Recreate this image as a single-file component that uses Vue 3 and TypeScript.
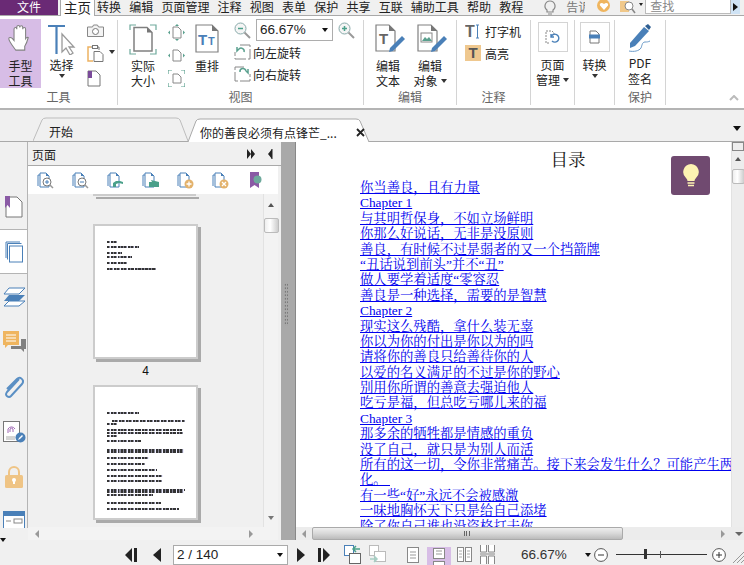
<script setup lang="ts">
const menus = ['转换', '编辑', '页面管理', '注释', '视图', '表单', '保护', '共享', '互联', '辅助工具', '帮助', '教程']
const links = [
  '你当善良，且有力量', 'Chapter 1', '与其明哲保身，不如立场鲜明', '你那么好说话，无非是没原则',
  '善良，有时候不过是弱者的又一个挡箭牌', '“丑话说到前头”并不“丑”', '做人要学着适度“零容忍',
  '善良是一种选择，需要的是智慧', 'Chapter 2', '现实这么残酷，拿什么装无辜', '你以为你的付出是你以为的吗',
  '请将你的善良只给善待你的人', '以爱的名义满足的不过是你的野心', '别用你所谓的善意去强迫他人',
  '吃亏是福，但总吃亏哪儿来的福', 'Chapter 3', '那多余的牺牲都是情感的重负', '没了自己，就只是为别人而活',
  '所有的这一切，令你非常痛苦。接下来会发生什么？可能产生两', '化。 ', '有一些“好”永远不会被感激',
  '一味地胸怀天下只是给自己添堵', '除了你自己谁也没资格打击你'
]
const panelTools = ['zoomin', 'zoomout', 'extract', 'replace', 'add', 'del', 'mark']
const thumbA = [[0, 10, 0], [0, 32, 4], [0, 15, 5], [0, 25, 3], [0, 20, 5], [0, 49, 5]]
const thumbB = [[0, 32, 0], [5, 73, 6], [0, 10, 1], [0, 75, 4], [0, 76, 1], [0, 10, 1], [0, 34, 3], [0, 77, 7], [0, 77, 0], [0, 42, 4], [0, 38, 4], [0, 50, 4], [0, 56, 4], [0, 55, 3], [0, 78, 7], [0, 77, 0], [0, 46, 1], [0, 54, 6], [0, 72, 4]]
</script>

<template>
  <div class="app">
    <header class="menubar">
      <div class="file">文件</div>
      <div class="home">主页</div>
      <nav class="menus"><span v-for="m in menus" :key="m">{{ m }}</span></nav>
      <div class="tell">
        <svg width="14" height="15" viewBox="0 0 14 15"><path d="M7 1a5 5 0 0 0-3 9v2h6v-2a5 5 0 0 0-3-9zM5 14h4" fill="none" stroke="#888" stroke-width="1.2"/></svg>
        <span class="tell-text">告诉</span>
      </div>
      <span class="heart"><svg width="12" height="12" viewBox="0 0 12 12"><path d="M6 10 2 5.500C1 3 4 2 6 4c2-2 5-1 4 1.500z" fill="#fff"/></svg></span>
      <svg class="find" width="24" height="14" viewBox="0 0 24 14"><rect x="1" y="1" width="9" height="11" fill="#f0c88a"/><circle cx="10" cy="6" r="4" fill="#fff" stroke="#888"/><path d="m13 9 3 4" stroke="#888" stroke-width="1.500"/><path d="m20 3 4 0-2 3z" fill="#222"/></svg>
      <div class="search">查找</div>
      <div class="searchbtn"><i></i></div>
    </header>

    <section class="ribbon">
      <div class="group g-tools">
        <div class="items">
          <button class="big hand">
            <svg width="30" height="31" viewBox="0 0 30 31"><path d="M9 30C6 26 1 20 1 17c0-2 2-2 4-.5l2 2.500V6c0-2.500 3.200-2.500 3.200 0V3.500c0-2.500 3.400-2.500 3.400 0V4c0-2.500 3.400-2.500 3.400 0v2c0-2.500 3.300-2.500 3.300 0v11c1-1.500 2-2 3-1.500-1 4-2 7-4 10v4.500z" fill="#fff" stroke="#808080" stroke-width="1.200"/></svg>
            <span>手型<br>工具</span>
          </button>
          <button class="big select">
            <svg width="30" height="31" viewBox="0 0 30 31"><path d="M1 2h17M9.500 2v28" stroke="#4a80b8" stroke-width="2.200" fill="none"/><path d="M15 10v18l4-4 4 7 3-2-4-6h5z" fill="#fff" stroke="#9a9a9a" stroke-width="1.300"/></svg>
            <span>选择</span><i class="caret"></i>
          </button>
          <div class="stack tools-stack">
            <svg width="17" height="13" viewBox="0 0 17 13"><path d="M.500 3h5l1-2h4l1 2h5v9.500H.500z" fill="#f4f4f4" stroke="#888"/><circle cx="8.500" cy="7.500" r="3" fill="#fff" stroke="#777"/></svg>
            <div class="with-caret">
              <svg width="20" height="17" viewBox="0 0 20 17"><path d="M4 2H1v14h5" fill="none" stroke="#edb262" stroke-width="1.500"/><path d="M4 2h8v3" fill="none" stroke="#777"/><rect x="5.500" y=".500" width="5" height="3" fill="#fff" stroke="#777"/><path d="M7 6.500h6l3 3v7H7z" fill="#fff" stroke="#777"/></svg><i class="caret"></i>
            </div>
            <svg width="14" height="17" viewBox="0 0 14 17"><path d="M1 1h8l4 4v11H1z" fill="#fff" stroke="#777"/><rect x="1" y="1" width="4" height="7" fill="#7a4a9a"/></svg>
          </div>
        </div>
        <div class="glabel">工具</div>
      </div>

      <div class="group g-view">
        <div class="items">
          <button class="big actual">
            <svg width="28" height="31" viewBox="0 0 28 31"><path d="M1 6V1h6M21 1h6v5M1 25v5h6M21 30h6v-5" fill="none" stroke="#6ea99c" stroke-width="1.200"/><path d="M5 3.500h13l5 5V27H5z" fill="#fff" stroke="#808080" stroke-width="1.500"/><path d="M18 3.500 23 8.500H18z" fill="#777"/></svg>
            <span>实际<br>大小</span>
          </button>
          <div class="stack fit-stack">
            <svg width="17" height="17" viewBox="0 0 17 17"><path d="M5 3h5l3 3v8H5z" fill="#fff" stroke="#888"/><path d="m9 0-2 2h4zM9 17l-2-2h4zM0 8.500l2-2v4zM17 8.500l-2-2v4z" fill="#5aa08e"/></svg>
            <svg width="17" height="13" viewBox="0 0 17 13"><path d="M5 1h5l3 3v8H5z" fill="#fff" stroke="#888"/><path d="M0 6.500l2-2v4zM17 6.500l-2-2v4z" fill="#5aa08e"/></svg>
            <svg width="17" height="17" viewBox="0 0 17 17"><path d="M5 4h5l3 3v6H5z" fill="#fff" stroke="#888"/><path d="M0 4V0h4M13 0h4v4M0 13v4h4M17 13v4h-4" fill="none" stroke="#5aa08e" stroke-width="1.200"/></svg>
          </div>
          <button class="big reflow">
            <svg width="24" height="29" viewBox="0 0 24 29"><path d="M1 1h16l6 6v21H1z" fill="#fff" stroke="#808080" stroke-width="1.200"/><path d="M17 1l6 6h-6z" fill="#777"/><text x="3" y="21" font-size="15" font-weight="700" fill="#4a80b8" font-family="Liberation Sans">T</text><text x="13" y="21" font-size="11" font-weight="700" fill="#4a80b8" font-family="Liberation Sans">T</text></svg>
            <span>重排</span>
          </button>
          <div class="zoomcol">
            <div class="zoomrow">
              <svg width="17" height="17" viewBox="0 0 17 17"><circle cx="6.500" cy="6.500" r="5.500" fill="#f5f5f5" stroke="#8aa"/><path d="m10.500 10.500 5.500 5.500" stroke="#999" stroke-width="2"/><path d="M4 6.500h5" stroke="#4aa08a" stroke-width="1.500"/></svg>
              <div class="combo"><span>66.67%</span><i class="caret dark"></i></div>
              <svg width="17" height="17" viewBox="0 0 17 17"><circle cx="6.500" cy="6.500" r="5.500" fill="#f5f5f5" stroke="#8aa"/><path d="m10.500 10.500 5.500 5.500" stroke="#999" stroke-width="2"/><path d="M4 6.500h5M6.500 4v5" stroke="#4aa08a" stroke-width="1.500"/></svg>
            </div>
            <div class="rot">
              <svg width="17" height="16" viewBox="0 0 17 16"><path d="M6 1h10v14H1V8" fill="none" stroke="#888" stroke-dasharray="12 2"/><path d="M10 8a3 3 0 0 0-5-3L3 7V3" fill="none" stroke="#5aa08e" stroke-width="1.500"/></svg>
              <span>向左旋转</span>
            </div>
            <div class="rot">
              <svg width="17" height="16" viewBox="0 0 17 16"><path d="M10 1H1v14h15V8" fill="none" stroke="#888" stroke-dasharray="12 2"/><path d="M6 6a3 3 0 0 1 6-1l2 2V3" fill="none" stroke="#5aa08e" stroke-width="1.500"/></svg>
              <span>向右旋转</span>
            </div>
          </div>
        </div>
        <div class="glabel">视图</div>
      </div>

      <div class="group g-edit">
        <div class="items">
          <button class="big w42">
            <svg width="30" height="29" viewBox="0 0 30 29"><path d="M1 1h13l6 6v20H1z" fill="#fff" stroke="#808080" stroke-width="1.200"/><path d="M14 1l6 6h-6z" fill="#777"/><text x="4" y="20" font-size="15" font-weight="700" fill="#666" font-family="Liberation Sans">T</text><path d="m14 28 1-4 12-12 3 3-12 12z" fill="#4a80b8"/></svg>
            <span>编辑<br>文本</span>
          </button>
          <button class="big w42">
            <svg width="30" height="29" viewBox="0 0 30 29"><path d="M1 1h13l6 6v20H1z" fill="#fff" stroke="#808080" stroke-width="1.200"/><path d="M14 1l6 6h-6z" fill="#777"/><rect x="4" y="9" width="11" height="9" fill="#fff" stroke="#888"/><path d="m5 17 3-4 2 2 2-2 3 4z" fill="#5aa08e"/><path d="m14 28 1-4 12-12 3 3-12 12z" fill="#4a80b8"/></svg>
            <span>编辑<br>对象<i class="caret inline"></i></span>
          </button>
        </div>
        <div class="glabel">编辑</div>
      </div>

      <div class="group g-note">
        <div class="items note-items">
          <div class="rot note">
            <svg width="16" height="15" viewBox="0 0 16 15"><text x="0" y="13" font-size="16" font-weight="700" fill="#666" font-family="Liberation Sans">T</text><path d="M11 1h3M12.500 1v13M11 14h3" stroke="#4a80b8" fill="none"/></svg>
            <span>打字机</span>
          </div>
          <div class="rot note">
            <span class="hl">T</span>
            <span>高亮</span>
          </div>
        </div>
        <div class="glabel">注释</div>
      </div>

      <div class="group g-page">
        <div class="items">
          <button class="big framed">
            <b class="frame"><svg width="15" height="15" viewBox="0 0 15 15"><path d="M4 13H1V1h6l2 2v2" fill="none" stroke="#888" stroke-dasharray="2 1"/><path d="M6 7a4 4 0 1 1 1 4M6 4v3h3" fill="none" stroke="#4a80b8" stroke-width="1.400"/></svg></b>
            <span>页面<br>管理<i class="caret inline"></i></span>
          </button>
        </div>
      </div>

      <div class="group g-conv">
        <div class="items">
          <button class="big framed">
            <b class="frame"><svg width="11" height="14" viewBox="0 0 11 14"><path d="M1 1h6l3 3v9H1z" fill="#fff" stroke="#777"/><rect x="0" y="4.500" width="11" height="4" fill="#4a80b8"/></svg></b>
            <span>转换</span><i class="caret"></i>
          </button>
        </div>
      </div>

      <div class="group g-sign">
        <div class="items">
          <button class="big">
            <svg class="pen" width="26" height="28" viewBox="0 0 26 28"><path d="M2 19 16 3l5 4L7 22l-5 2z" fill="#4a80b8"/><path d="M17 2l3-2 3 3-2 3z" fill="#2f5f92"/><path d="M1 27c5 1 10 0 12-3 1-2 1-6 4-6 2 0 3 0 5-1" fill="none" stroke="#6a9ac8"/></svg>
            <span class="pdf">PDF<br>签名</span>
          </button>
        </div>
        <div class="glabel">保护</div>
      </div>
      <svg class="collapse" width="10" height="6" viewBox="0 0 10 6"><path d="m1 5 4-4 4 4" fill="none" stroke="#bbb" stroke-width="2"/></svg>
    </section>

    <section class="tabbar">
      <div class="tab first">
        <svg class="tabshape" width="155" height="24" viewBox="0 0 155 24"><path d="M0 24 9 3q1-2 4-2h130q3 0 4 2l8 21" fill="none" stroke="#bdbdbd"/></svg>
        <span>开始</span>
      </div>
      <div class="tab current">
        <svg class="tabshape" width="185" height="24" viewBox="0 0 185 24"><path d="M0 24 8 3q1-2 4-2h156q3 0 4 2l9 21" fill="#fff" stroke="#a9a9a9"/></svg>
        <span>你的善良必须有点锋芒_...</span>
        <svg class="closex" width="9" height="9" viewBox="0 0 9 9"><path d="m1 1 7 7M8 1 1 8" stroke="#222" stroke-width="1.800"/></svg>
      </div>
      <i class="tabmenu"></i>
    </section>

    <main class="main">
      <aside class="rail">
        <div class="railitems">
          <div class="railbtn">
            <svg width="18" height="22" viewBox="0 0 18 22"><path d="M1 1h11l5 5v15H1z" fill="#fff" stroke="#777"/><path d="M0 0h5v12L2.500 9 0 12z" fill="#8a5aa5"/></svg>
          </div>
          <div class="railbtn active">
            <svg width="19" height="22" viewBox="0 0 19 22"><path d="M1 17V1h14M2.500 18.500V2.500h14" fill="none" stroke="#4a80b8"/><rect x="4.500" y="5" width="13" height="16" fill="#fff" stroke="#4a80b8"/></svg>
          </div>
          <div class="railbtn">
            <svg width="23" height="20" viewBox="0 0 23 20"><path d="M6 1h16l-6 6H1zM1 19l5-5h16l-6 5z" fill="#fff" stroke="#4a80b8"/><path d="M6 8h16l-6 6H1z" fill="#4a80b8"/></svg>
          </div>
          <div class="railbtn">
            <svg width="23" height="21" viewBox="0 0 23 21"><path d="M0 0h16v14H5l-3 3v-3H0z" fill="#efb55f"/><path d="M3 4h10M3 7h10M3 10h10" stroke="#fff"/><path d="M18 8h5v10h-2v3l-3-3H8v-3h10z" fill="#808080"/></svg>
          </div>
          <div class="railbtn">
            <svg width="20" height="22" viewBox="0 0 20 22"><path d="m15 3-12 13c-3 4 2 6 4 4L18 8c3-4-2-8-5-5L3 13" fill="none" stroke="#5a8fc4" stroke-width="2"/></svg>
          </div>
          <div class="railbtn">
            <svg width="23" height="22" viewBox="0 0 23 22"><rect x=".500" y=".500" width="16" height="20" fill="#fff" stroke="#777"/><path d="M5 12V8a4 4 0 0 1 7 0M7 11V8a2 2 0 0 1 3 0v3" fill="none" stroke="#a06ab5"/><path d="M3 16h9M3 18h9" stroke="#aaa"/><circle cx="17.500" cy="16.500" r="5" fill="#4a80b8"/><path d="m15 19 1-2 3-3 1 1-3 3z" fill="#fff"/></svg>
          </div>
          <div class="railbtn">
            <svg width="18" height="22" viewBox="0 0 18 22"><path d="M4 10V6a5 5 0 0 1 10 0v4" fill="none" stroke="#efc485" stroke-width="2"/><rect y="9" width="18" height="13" rx="1.500" fill="#efc485"/><circle cx="9" cy="14" r="2" fill="#fff"/><rect x="8" y="14" width="2" height="4" fill="#fff"/></svg>
          </div>
          <div class="railbtn">
            <svg width="22" height="22" viewBox="0 0 22 22"><rect x=".500" y=".500" width="21" height="21" fill="#fff" stroke="#4a80b8"/><rect width="22" height="5" fill="#4a80b8"/><path d="M3 10h5" stroke="#888"/><rect x="11" y="8" width="8" height="4" fill="none" stroke="#888"/></svg>
          </div>
        </div>
        <i class="railmore"></i>
      </aside>

      <section class="panel">
        <div class="panelhead">
          <span>页面</span>
          <svg width="26" height="10" viewBox="0 0 26 10"><path d="M0 0l4 5-4 5zM4 0l4 5-4 5zM25 0v10l-4-5z" fill="#222"/><path d="M25 0v10" stroke="#222"/></svg>
        </div>
        <div class="paneltools">
          <svg v-for="t in panelTools" :key="t" width="17" height="17" viewBox="0 0 17 17">
            <template v-if="t !== 'mark'">
              <path d="M1 14V3h2M3 15V1h6l3 3v11z" fill="#fff" stroke="#4a80b8"/>
              <path d="M9 1l3 3H9z" fill="#4a80b8"/>
            </template>
            <template v-if="t === 'zoomin' || t === 'zoomout'">
              <circle cx="10" cy="10" r="4" fill="#fff" stroke="#777"/><path d="m13 13 3 3" stroke="#999" stroke-width="1.500"/><path d="M8 10h4" stroke="#4a80b8"/>
              <path v-if="t === 'zoomin'" d="M10 8v4" stroke="#4a80b8"/>
            </template>
            <path v-if="t === 'extract'" d="M6 15v-4l3-2h4l3 1v2l-4-1-3 1v3z" fill="#4aa08a"/>
            <path v-if="t === 'replace'" d="M7 10h3l-1-2 4 1 4 1v5H7z" fill="#4aa08a"/>
            <template v-if="t === 'add' || t === 'del'">
              <circle cx="12" cy="12" r="4.500" fill="#e3b26c"/>
              <path v-if="t === 'add'" d="M9.500 12h5M12 9.500v5" stroke="#fff" stroke-width="1.300"/>
              <path v-else d="m10 10 4 4M14 10l-4 4" stroke="#fff" stroke-width="1.300"/>
            </template>
            <template v-if="t === 'mark'">
              <path d="M3 0h9v16l-4.500-3L3 16z" fill="#8a5aa5"/><circle cx="10.500" cy="7.500" r="4" fill="#6ea99c"/>
            </template>
          </svg>
        </div>
        <div class="thumbwrap">
          <div class="thumbs">
            <div class="prevpage"></div>
            <div class="sheet sheet-a">
              <i v-for="(l, i) in thumbA" :key="i" :style="{ marginLeft: l[0] + 'px', width: l[1] + 'px', marginTop: l[2] + 'px' }"></i>
            </div>
            <div class="pageno">4</div>
            <div class="sheet sheet-b">
              <i v-for="(l, i) in thumbB" :key="i" :style="{ marginLeft: l[0] + 'px', width: l[1] + 'px', marginTop: l[2] + 'px' }"></i>
            </div>
          </div>
          <div class="vscroll small">
            <i class="up"></i>
            <b class="thumb"></b>
            <i class="down"></i>
          </div>
        </div>
        <div class="hscroll panelh"><i class="lt"></i><i class="rt"></i></div>
      </section>

      <div class="splitter"><i></i></div>

      <section class="docwrap">
        <div class="docmain">
          <article class="doc">
            <div class="page">
              <h1>目录</h1>
              <a v-for="(l, i) in links" :key="i" href="#" :class="{ first: i === 0 }">{{ l }}</a>
            </div>
            <div class="tip">
              <svg width="18" height="25" viewBox="0 0 18 25"><path d="M9 1a8 8 0 0 0-5 14c1 1 1.500 2 1.500 3h7c0-1 .5-2 1.500-3A8 8 0 0 0 9 1z" fill="#fdf3b2"/><path d="M5.500 20h7M6 22.500h6" stroke="#fdf3b2" stroke-width="1.500"/></svg>
            </div>
          </article>
          <div class="vscroll big">
            <em class="splitbox"></em>
            <i class="up"></i>
            <b class="thumb"></b>
          </div>
        </div>
        <div class="hscroll dochs">
          <i class="lt"></i><b class="hthumb"><u></u></b><i class="rt"></i><i class="dn"></i>
        </div>
      </section>
    </main>

    <footer class="status">
      <svg class="n1" width="16" height="14" viewBox="0 0 16 14"><path d="M7 0v14L0 7zM9 0h3v14H9z" fill="#222"/></svg>
      <svg class="n2" width="8" height="14" viewBox="0 0 8 14"><path d="M8 0v14L0 7z" fill="#222"/></svg>
      <div class="pageinput"><span>2 / 140</span><i class="caret dark"></i></div>
      <svg class="n3" width="8" height="14" viewBox="0 0 8 14"><path d="M0 0v14l8-7z" fill="#222"/></svg>
      <svg class="n4" width="12" height="14" viewBox="0 0 12 14"><path d="M0 0h3v14H0zM5 0v14l7-7z" fill="#222"/></svg>
      <svg class="n5" width="17" height="19" viewBox="0 0 17 19"><rect x=".500" y=".500" width="9" height="10" fill="#fff" stroke="#4a80b8"/><rect x="5.500" y="8.500" width="11" height="10" fill="#fff" stroke="#666"/><path d="M16 4H9M12 1 9 4l3 3" fill="none" stroke="#4aa08a" stroke-width="1.500"/></svg>
      <svg class="n6" width="17" height="19" viewBox="0 0 17 19"><rect x=".500" y=".500" width="9" height="10" fill="#fff" stroke="#bbb"/><rect x="5.500" y="6.500" width="11" height="10" fill="#fff" stroke="#bbb"/><path d="M1 14h7M5 11l3 3-3 3" fill="none" stroke="#a6cfc4" stroke-width="1.500"/></svg>
      <svg class="n7" width="12" height="16" viewBox="0 0 12 16"><rect x=".500" y=".500" width="11" height="15" fill="#fff" stroke="#888"/><path d="M3 5h6M3 8h6M3 11h6" stroke="#999"/></svg>
      <div class="n8"><svg width="12" height="17" viewBox="0 0 12 17"><rect x=".500" y=".500" width="11" height="10" fill="#fff" stroke="#888"/><path d="M3 3h6M3 6h6" stroke="#999"/><rect x=".500" y="13.500" width="11" height="6" fill="#fff" stroke="#888"/></svg></div>
      <svg class="n9" width="15" height="15" viewBox="0 0 15 15"><rect x=".500" y=".500" width="6" height="14" fill="#fff" stroke="#888"/><rect x="8.500" y=".500" width="6" height="14" fill="#fff" stroke="#888"/><path d="M2 4h3M2 7h3M2 10h3M10 4h3M10 7h3M10 10h3" stroke="#aaa"/></svg>
      <svg class="n10" width="15" height="19" viewBox="0 0 15 19"><path d="M.5 0v7h6V0M8.500 0v7h6V0M.5 19v-8h6v8M8.500 19v-8h6v8M0 9h15" fill="#fff" stroke="#888"/></svg>
      <span class="pct">66.67%</span>
      <i class="caret dark pctcaret"></i>
      <svg class="n11" width="14" height="14" viewBox="0 0 14 14"><circle cx="7" cy="7" r="6.400" fill="#fff" stroke="#555"/><path d="M4 7h6" stroke="#333"/></svg>
      <div class="slider"><b></b><u></u></div>
      <svg class="n12" width="14" height="14" viewBox="0 0 14 14"><circle cx="7" cy="7" r="6.400" fill="#fff" stroke="#555"/><path d="M4 7h6M7 4v6" stroke="#333"/></svg>
      <svg class="grip" width="11" height="11" viewBox="0 0 11 11"><path d="M0 11 11 0M4 11l7-7M8 11l3-3" stroke="#999"/></svg>
    </footer>
  </div>
</template>

<style>
html, body { margin: 0; background: #f0f0f0; }
</style>

<style scoped>
.app { width: 744px; height: 565px; overflow: hidden; display: flex; flex-direction: column; background: #f0f0f0; color: #222; font: 12px/15px "Noto Sans CJK SC", "Noto Sans", sans-serif; }
button { all: unset; box-sizing: border-box; }
i, b, u, em { display: block; font-style: normal; text-decoration: none; }
.caret { width: 0; height: 0; border: 3.500px solid transparent; border-top: 4px solid #333; border-bottom: 0; }
.caret.dark { border-top-color: #111; }
.caret.inline { display: inline-block; margin-left: 3px; vertical-align: 3px; }

.menubar { height: 15px; flex: none; display: flex; border-bottom: 1px solid #a9a9a9; position: relative; line-height: 14px; white-space: nowrap; }
.file { width: 58px; height: 15px; background: #6a2a75; color: #fff; text-align: center; }
.home { width: 33px; height: 16px; margin: 0 2px; background: #fff; border: 1px solid #a9a9a9; border-width: 0 1px; text-align: center; font-size: 13.500px; position: relative; z-index: 1; }
.menus { display: flex; gap: 8.200px; }
.tell { margin-left: 20px; display: flex; gap: 9px; width: 43px; overflow: hidden; color: #777; flex: none; }
.tell-text { width: 19px; overflow: hidden; flex: none; }
.heart { width: 13px; height: 13px; border-radius: 50%; background: #efb55f; display: flex; align-items: center; justify-content: center; margin-left: 11px; margin-top: -1px; flex: none; }
.find { margin-left: 9px; flex: none; }
.search { width: 86px; height: 14px; margin-left: 2px; background: #fff; border: 1px solid #bbb; border-top: 0; box-sizing: border-box; color: #888; padding-left: 4px; line-height: 12px; flex: none; }
.searchbtn { width: 9px; height: 14px; background: #cfe3f5; flex: none; }
.searchbtn i { width: 0; height: 0; margin: 3px 0 0 2px; border: 4px solid transparent; border-left: 5px solid #111; border-right: 0; }

.ribbon { height: 92px; flex: none; background: #fff; border-bottom: 2px solid #b4b4b4; display: flex; position: relative; }
.group { display: flex; flex-direction: column; flex: none; position: relative; box-sizing: border-box; border-right: 1px solid #d4d4d4; margin: 4px 0 3px; height: 85px; }
.items { display: flex; flex: 1; min-height: 0; margin-top: -1px; }
.glabel { position: absolute; bottom: 1px; left: 0; right: 0; text-align: center; color: #666; line-height: 15px; }
.g-tools { width: 118px; }
.g-view { width: 246px; }
.g-edit { width: 93px; }
.g-note { width: 74px; }
.g-page { width: 44px; }
.g-conv { width: 40px; }
.g-sign { width: 51px; }
.big { display: flex; flex-direction: column; align-items: center; text-align: center; line-height: 15px; flex: none; padding-top: 5px; }
.big > span { margin-top: 7px; white-space: nowrap; }
.hand { width: 41px; height: 69px; background: #d7bde6; }
.select { width: 41px; }
.select > span { margin-top: 2px; }
.select .caret { margin-top: 2px; }
.stack { display: flex; flex-direction: column; align-items: flex-start; }
.tools-stack { margin-left: 5px; padding-top: 5px; gap: 8px; }
.with-caret { display: flex; align-items: center; gap: 2px; }
.with-caret .caret { margin-top: -4px; }
.actual { width: 46px; margin-left: 2px; }
.actual > span { margin-top: 3px; }
.fit-stack { width: 22px; padding: 5px 0 0 2px; gap: 8px; box-sizing: border-box; flex: none; }
.reflow { width: 38px; }
.reflow > span { margin-top: 5px; }
.zoomcol { margin-left: 8px; width: 122px; display: flex; flex-direction: column; padding-top: 0; flex: none; }
.zoomrow { display: flex; align-items: center; gap: 5px; height: 22px; }
.zoomrow svg { flex: none; }
.combo { width: 77px; height: 22px; box-sizing: border-box; border: 1px solid #adadad; display: flex; align-items: center; justify-content: space-between; padding: 0 4px 0 3px; font: 13.500px/20px "Liberation Sans", sans-serif; }
.rot { display: flex; align-items: center; gap: 2px; height: 22px; }
.rot svg { flex: none; }
.w42 { width: 42px; }
.w42 svg { margin-left: 4px; }
.w42 > span { margin-top: 5px; }
.g-edit .items { padding-left: 3px; }
.note-items { flex-direction: column; padding: 0 0 0 8px; }
.note { gap: 4px; height: 22px; flex: none; }
.note-items .note:first-child { margin-top: 1px; }
.hl { width: 16px; height: 16px; background: #efc88f; color: #555; font: 700 15px/16px "Liberation Sans", sans-serif; text-align: center; }
.framed { width: 100%; padding-top: 3px; }
.frame { width: 30px; height: 30px; border: 1px solid #d4d4d4; box-sizing: border-box; display: flex; align-items: center; justify-content: center; }
.framed > span { margin-top: 5px; }
.framed .caret { margin-top: 2px; }
.g-sign .big { width: 100%; }
.pen { margin-left: 2px; }
.big > .pdf { margin-top: 3px; line-height: 16px; }
.collapse { position: absolute; left: 729px; top: 79px; }

.tabbar { height: 32px; flex: none; border-bottom: 1px solid #a9a9a9; box-sizing: border-box; display: flex; align-items: flex-end; position: relative; padding-left: 33px; background: #f0f0f0; }
.tab { height: 24px; position: relative; flex: none; }
.tab span { position: relative; display: block; white-space: nowrap; line-height: 29px; }
.tabshape { position: absolute; left: 0; top: 0; }
.first { width: 155px; }
.first span { padding-left: 16px; }
.current { width: 185px; margin-bottom: -1px; }
.current span { padding-left: 12px; }
.closex { position: absolute; left: 168px; top: 10px; }
.tabmenu { position: absolute; left: 733px; top: 16px; width: 0; height: 0; border: 4.500px solid transparent; border-top: 5px solid #111; border-bottom: 0; }

.main { flex: 1; display: flex; min-height: 0; }
.rail { width: 28px; flex: none; box-sizing: border-box; position: relative; }
.railitems { height: 386px; padding-top: 42px; box-sizing: border-box; overflow: hidden; border-right: 1px solid #b4b4b4; }
.railbtn { height: 45px; box-sizing: border-box; display: flex; align-items: center; justify-content: center; margin-right: -1px; }
.railbtn.active { background: #fff; border: 1px solid #b4b4b4; border-width: 1px 0; position: relative; }
.railmore { position: absolute; left: 0; top: 396px; width: 0; height: 0; border: 3.500px solid transparent; border-top: 4px solid #111; border-bottom: 0; }
.panel { width: 253px; flex: none; display: flex; flex-direction: column; }
.panelhead { height: 24px; padding: 1px 8px 0 4px; border-bottom: 1px solid #a9a9a9; box-sizing: border-box; display: flex; justify-content: space-between; align-items: center; flex: none; }
.paneltools { height: 28px; margin-right: 3px; background: #fff; display: flex; align-items: center; padding-left: 9px; gap: 18px; flex: none; }
.thumbwrap { flex: 1; min-height: 0; display: flex; overflow: hidden; }
.thumbs { width: 235px; flex: none; overflow: hidden; padding-left: 65px; box-sizing: border-box; }
.prevpage { width: 103px; height: 0; border-bottom: 2px solid #ccc; box-shadow: 3px 3px 0 #aaa; }
.sheet { width: 105px; height: 135px; box-sizing: border-box; background: #fff; border: 2px solid #ccc; box-shadow: 3px 3px 0 #aaa; padding-left: 12px; }
.sheet i { height: 2px; background: repeating-linear-gradient(90deg, #333 0 2px, #889 2px 3px, #eef 3px 3.500px); }
.sheet-a { margin-top: 28px; padding-top: 15px; }
.sheet-a i { margin-bottom: -1px; }
.sheet-b { padding-top: 25px; }
.pageno { height: 26px; text-align: center; width: 105px; font: 12px/24px "Liberation Sans", sans-serif; color: #111; }
.vscroll { flex: none; width: 15px; box-sizing: border-box; background: #f3f3f3; border-left: 1px solid #e2e2e2; position: relative; margin-right: 3px; }
.vscroll .up { width: 0; height: 0; border: 3.500px solid transparent; border-bottom: 4px solid #555; border-top: 0; margin: 9px auto 0; }
.vscroll .thumb { width: 15px; height: 15px; box-sizing: border-box; border: 1px solid #bbb; border-radius: 2px; background: linear-gradient(90deg, #eee, #fff 40%, #ccc); margin: 11px 0 0 0; }
.vscroll .down { position: absolute; left: 4px; bottom: 7px; width: 0; height: 0; border: 3.500px solid transparent; border-top: 4px solid #777; border-bottom: 0; }
.hscroll { height: 13px; flex: none; position: relative; background: #f3f3f3; display: flex; align-items: center; }
.panelh { margin-right: 3px; }
.lt { width: 0; height: 0; border: 4px solid transparent; border-right: 4px solid #999; border-left: 0; margin-left: 7px; }
.rt { width: 0; height: 0; border: 4px solid transparent; border-left: 4px solid #999; border-right: 0; position: absolute; right: 25px; }
.splitter { width: 15px; flex: none; background: #a9a9a9; border-right: 1px solid #888; box-sizing: border-box; position: relative; }
.splitter i { width: 4px; height: 43px; margin: 141px 0 0 3px; background: radial-gradient(circle, #666 0.7px, transparent 0.8px) 0 0 / 2.500px 3.500px; }
.docwrap { flex: 1; min-width: 0; display: flex; flex-direction: column; }
.docmain { flex: 1; min-height: 0; display: flex; }
.doc { width: 435px; flex: none; background: #fff; overflow: hidden; position: relative; }
.page { width: 480px; padding-left: 64px; box-sizing: border-box; font: 13.330px/15.400px "Liberation Serif", "Noto Serif CJK SC", "Noto Sans CJK SC", serif; }
h1 { margin: 7px 0 0; font-weight: 400; font-size: 17.500px; line-height: 22px; text-align: center; color: #111; }
.page a { display: block; color: #00e; text-decoration: underline; white-space: pre; height: 15.400px; }
.page a.first { margin-top: 9px; margin-bottom: 0; }
.tip { position: absolute; left: 375px; top: 14px; width: 39px; height: 39px; border-radius: 3px; background: #704a70; display: flex; align-items: center; justify-content: center; }
.vscroll.big { width: 13px; margin: 0; background: #ededed; padding: 0; display: block; }
.splitbox { height: 9px; border: 1px solid #888; box-sizing: border-box; background: #eee; }
.vscroll.big .up { margin-top: 6px; }
.vscroll.big .thumb { width: 13px; height: 15px; margin-top: 8px; }
.dochs { background: #ececec; }
.hthumb { width: 311px; height: 13px; margin-left: 6px; box-sizing: border-box; border: 1px solid #aaa; border-radius: 2px; background: linear-gradient(#eee, #d8d8d8 50%, #bbb); display: flex; justify-content: center; align-items: center; }
.hthumb u { width: 7px; height: 5px; background: repeating-linear-gradient(90deg, #666 0 1px, transparent 1px 2.500px); }
.dochs .lt { margin-left: 6px; }
.dochs .rt { right: 19px; }
.dn { position: absolute; right: 1px; width: 0; height: 0; border: 4px solid transparent; border-top: 4px solid #666; border-bottom: 0; }

.status { height: 25px; flex: none; display: flex; align-items: center; padding: 4px 0 0 125px; box-sizing: border-box; position: relative; }
.status > svg { flex: none; }
.n2 { margin-left: 12px; }
.pageinput { width: 115px; height: 20px; margin-left: 12px; flex: none; box-sizing: border-box; background: #fff; border: 1px solid #aaa; display: flex; align-items: center; justify-content: space-between; padding: 0 4px 0 3px; font: 13.500px/18px "Liberation Sans", sans-serif; }
.n3 { margin-left: 9px; }
.n4 { margin-left: 13px; }
.n5 { margin-left: 14px; }
.n6 { margin-left: 8px; }
.n7 { margin-left: 21px; }
.n8 { width: 24px; height: 18px; margin-left: 8px; background: #d7bde6; display: flex; justify-content: center; overflow: hidden; flex: none; align-self: flex-end; padding-top: 1px; box-sizing: border-box; }
.n9 { margin-left: 6px; }
.n10 { margin-left: 8px; }
.pct { margin-left: 26px; width: 44px; font: 13.500px/18px "Liberation Sans", sans-serif; color: #333; flex: none; }
.pctcaret { margin-left: 20px; flex: none; }
.n11 { margin-left: 3px; }
.slider { width: 91px; height: 1px; margin-left: 8px; background: #333; position: relative; flex: none; }
.slider b { position: absolute; left: 28px; top: -5px; width: 3px; height: 10px; background: #333; }
.slider u { position: absolute; left: 44px; top: -3px; width: 1px; height: 7px; background: #555; }
.n12 { margin-left: 5px; }
.grip { position: absolute; left: 733px; bottom: 2px; }
</style>
